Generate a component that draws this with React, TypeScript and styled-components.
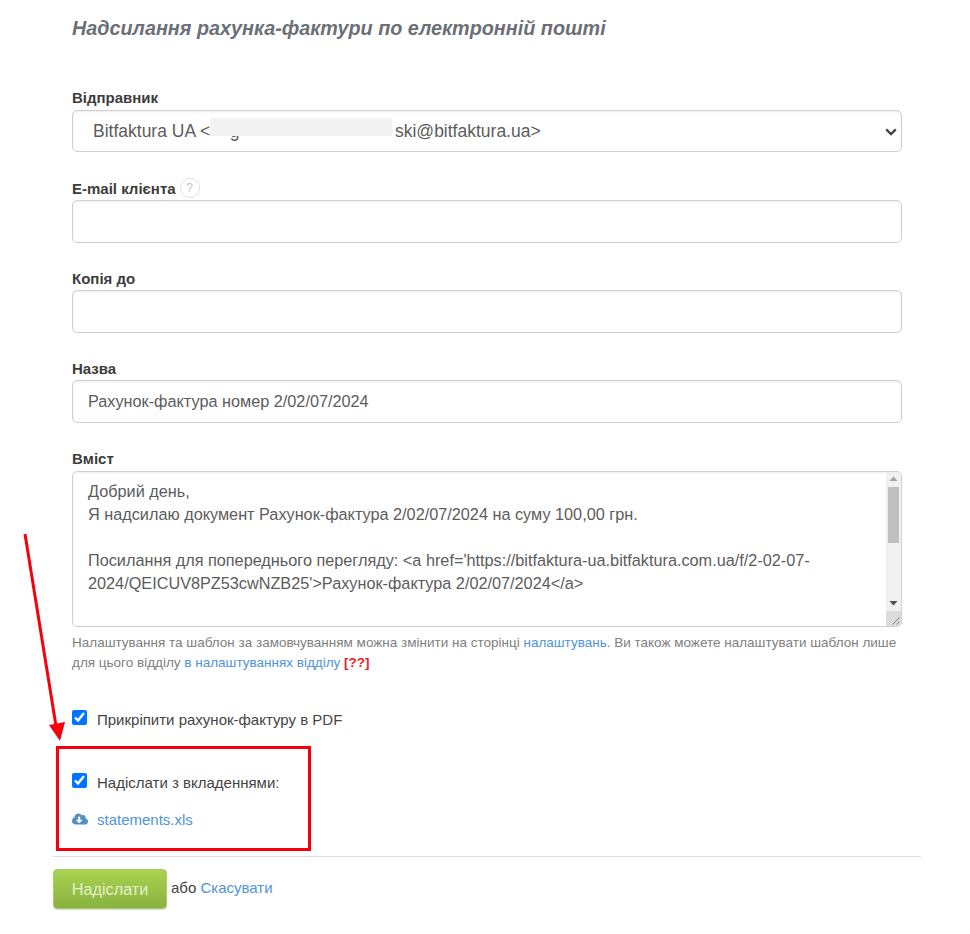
import React from 'react';
import styled, { createGlobalStyle } from 'styled-components';
import { FaCloudDownloadAlt } from 'react-icons/fa';

const GlobalStyle = createGlobalStyle`
  html, body {
    margin: 0;
    padding: 0;
    background: #fff;
  }
  body {
    font-family: "Liberation Sans", Arial, sans-serif;
    color: #444;
  }
`;

const Page = styled.div`
  position: relative;
  width: 970px;
  height: 934px;
  padding: 0 49px 0 53px;
  box-sizing: border-box;
  overflow: hidden;
`;

const FormBody = styled.form`
  padding: 17px 19px 0 19px;
`;

const Title = styled.h2`
  margin: 0 0 47.9px;
  font-size: 19.8px;
  line-height: 23px;
  font-style: italic;
  font-weight: 700;
  color: #6b6f76;
`;

const Field = styled.div`
  position: relative;
  margin-bottom: 25.85px;
`;

const Label = styled.label`
  display: flex;
  align-items: center;
  gap: 4px;
  height: 20px;
  margin-bottom: 1.9px;
  font-size: 15px;
  font-weight: 700;
  color: #3c3c3c;
`;

const HelpBadge = styled.span`
  display: inline-flex;
  align-items: center;
  justify-content: center;
  width: 18px;
  height: 18px;
  border: 1px solid #e2e2e2;
  border-radius: 50%;
  font-size: 12px;
  font-weight: 400;
  color: #c4c4c4;
`;

const Select = styled.select`
  display: block;
  width: 100%;
  height: 42.5px;
  padding: 0 30px 1px 20px;
  border: 1px solid #d0d0d0;
  border-radius: 5px;
  background: #fff;
  box-shadow: inset 0 1px 2px rgba(0, 0, 0, 0.08);
  appearance: none;
  font-family: inherit;
  font-size: 17.5px;
  color: #5c5c5c;
`;

const SelectChevron = styled.svg`
  position: absolute;
  right: 5px;
  top: 40px;
  width: 12px;
  height: 8px;
  pointer-events: none;
`;

const Redaction = styled.span`
  position: absolute;
  left: 138px;
  top: 30px;
  width: 182px;
  height: 18px;
  background: #f3f3f3;
`;

const TextInput = styled.input`
  display: block;
  width: 100%;
  height: 42.5px;
  padding: 0 15px 1px;
  box-sizing: border-box;
  border: 1px solid #d0d0d0;
  border-radius: 5px;
  box-shadow: inset 0 1px 2px rgba(0, 0, 0, 0.08);
  font-family: inherit;
  font-size: 16.25px;
  color: #5c5c5c;
  outline: none;
`;

const TextAreaWrap = styled.div`
  position: relative;
  height: 156px;
`;

const TextArea = styled.textarea`
  display: block;
  width: 100%;
  height: 100%;
  padding: 8px 15px;
  box-sizing: border-box;
  border: 1px solid #d0d0d0;
  border-radius: 5px;
  box-shadow: inset 0 1px 2px rgba(0, 0, 0, 0.08);
  resize: none;
  overflow: hidden;
  font-family: inherit;
  font-size: 16.25px;
  line-height: 23px;
  color: #5c5c5c;
  outline: none;
`;

/* drawn by hand: the capture browser hides native scrollbars */
const ScrollBar = styled.div`
  position: absolute;
  top: 1px;
  right: 1px;
  bottom: 1px;
  width: 15px;
  display: flex;
  flex-direction: column;
  background: #f0f0f0;
  border-radius: 0 4px 4px 0;
  overflow: hidden;
`;

const ScrollArrow = styled.div`
  flex: none;
  height: 15px;
  display: flex;
  align-items: center;
  justify-content: center;
`;

const ScrollTrack = styled.div`
  flex: 1;
  padding: 0 2px;
`;

const ScrollThumb = styled.div`
  height: 56px;
  background: #bfbfbf;
`;

const ResizeCorner = styled.div`
  flex: none;
  height: 15px;
  background: #dcdcdc;
`;

const Hint = styled.p`
  margin: 6.2px 0 37px;
  font-size: 13.5px;
  line-height: 20px;
  color: #808080;
`;

const Link = styled.a`
  color: #4f94d6;
  text-decoration: none;
`;

const Missing = styled.span`
  font-weight: 700;
  color: #f01c24;
`;

const CheckRow = styled.label`
  display: flex;
  align-items: center;
  gap: 10px;
  height: 20px;
  font-size: 15px;
  color: #444;
`;

const Check = styled.input`
  width: 15px;
  height: 15px;
  margin: 0;
  position: relative;
  top: -2px;
`;

const HighlightBox = styled.div`
  width: 255px;
  height: 105px;
  box-sizing: border-box;
  margin: 16px 0 0 -16px;
  padding: 24px 0 0 13px;
  border: 3px solid #f5000c;
`;

const FileRow = styled.div`
  display: flex;
  align-items: center;
  gap: 9px;
  margin-top: 17px;
  height: 20px;
  font-size: 15px;
`;

const CloudIcon = styled(FaCloudDownloadAlt)`
  width: 16px;
  height: 16px;
  color: #4f8fc4;
  position: relative;
  top: -1px;
`;

const Footer = styled.div`
  display: flex;
  align-items: center;
  gap: 4px;
  margin-top: 5px;
  padding-top: 12px;
  border-top: 1px solid #dedede;
  font-size: 15px;
  color: #444;
`;

const SubmitButton = styled.button`
  width: 114px;
  height: 40px;
  padding: 2px 0 0;
  border: 1px solid #a9cc68;
  border-radius: 4px;
  background: linear-gradient(#a9d350, #89b23f);
  box-shadow: 0 1px 1px rgba(0, 0, 0, 0.15);
  font-family: inherit;
  font-size: 16.25px;
  color: #e6efd2;
`;

const FooterText = styled.span`
  margin-bottom: 3px;
`;

const Arrow = styled.svg`
  position: absolute;
  left: 0;
  top: 520px;
  width: 90px;
  height: 240px;
`;

const nbsp = (count: number) => '\u00a0'.repeat(count);

const senderLabel = `Bitfaktura UA <${nbsp(4)}g${nbsp(32)}ski@bitfaktura.ua>`;

const messageBody = `Добрий день,
Я надсилаю документ Рахунок-фактура 2/02/07/2024 на суму 100,00 грн.

Посилання для попереднього перегляду: <a href='https://bitfaktura-ua.bitfaktura.com.ua/f/2-02-07-2024/QEICUV8PZ53cwNZB25'>Рахунок-фактура 2/02/07/2024</a>`;

export default function App() {
  return (
    <Page>
      <GlobalStyle />
      <FormBody>
        <Title>Надсилання рахунка-фактури по електронній пошті</Title>

        <Field>
          <Label>Відправник</Label>
          <Select defaultValue="sender">
            <option value="sender">{senderLabel}</option>
          </Select>
          <Redaction />
          <SelectChevron viewBox="0 0 12 8">
            <path d="M1.2 1.4 L6 6 L10.8 1.4" fill="none" stroke="#444" strokeWidth="2.4" />
          </SelectChevron>
        </Field>

        <Field>
          <Label>
            E-mail клієнта <HelpBadge>?</HelpBadge>
          </Label>
          <TextInput type="text" />
        </Field>

        <Field>
          <Label>Копія до</Label>
          <TextInput type="text" />
        </Field>

        <Field>
          <Label>Назва</Label>
          <TextInput type="text" defaultValue="Рахунок-фактура номер 2/02/07/2024" />
        </Field>

        <Label>Вміст</Label>
        <TextAreaWrap>
          <TextArea defaultValue={messageBody} />
          <ScrollBar>
            <ScrollArrow>
              <svg width="9" height="6" viewBox="0 0 9 6">
                <path d="M4.5 0.5 L8.5 5 H0.5 Z" fill="#a3a3a3" />
              </svg>
            </ScrollArrow>
            <ScrollTrack>
              <ScrollThumb />
            </ScrollTrack>
            <ScrollArrow>
              <svg width="9" height="6" viewBox="0 0 9 6">
                <path d="M0.5 1 H8.5 L4.5 5.5 Z" fill="#505050" />
              </svg>
            </ScrollArrow>
            <ResizeCorner>
              <svg width="15" height="15" viewBox="0 0 15 15">
                <path d="M13.5 6.5 L6.5 13.5 M13.5 10.5 L10.5 13.5" stroke="#808080" strokeWidth="1" />
              </svg>
            </ResizeCorner>
          </ScrollBar>
        </TextAreaWrap>
        <Hint>
          Налаштування та шаблон за замовчуванням можна змінити на сторінці{' '}
          <Link href="#">налаштувань</Link>. Ви також можете налаштувати шаблон лише для цього
          відділу <Link href="#">в налаштуваннях відділу</Link> <Missing>[??]</Missing>
        </Hint>

        <CheckRow>
          <Check type="checkbox" defaultChecked />
          Прикріпити рахунок-фактуру в PDF
        </CheckRow>

        <HighlightBox>
          <CheckRow>
            <Check type="checkbox" defaultChecked />
            Надіслати з вкладеннями:
          </CheckRow>
          <FileRow>
            <CloudIcon />
            <Link href="#">statements.xls</Link>
          </FileRow>
        </HighlightBox>
      </FormBody>

      <Footer>
        <SubmitButton type="button">Надіслати</SubmitButton>
        <FooterText>
          або <Link href="#">Скасувати</Link>
        </FooterText>
      </Footer>

      <Arrow viewBox="0 0 90 240">
        <line x1="25" y1="14" x2="56" y2="206" stroke="#f5000c" strokeWidth="3" />
        <polygon points="49,205 65,202 60,221" fill="#f5000c" />
      </Arrow>
    </Page>
  );
}
